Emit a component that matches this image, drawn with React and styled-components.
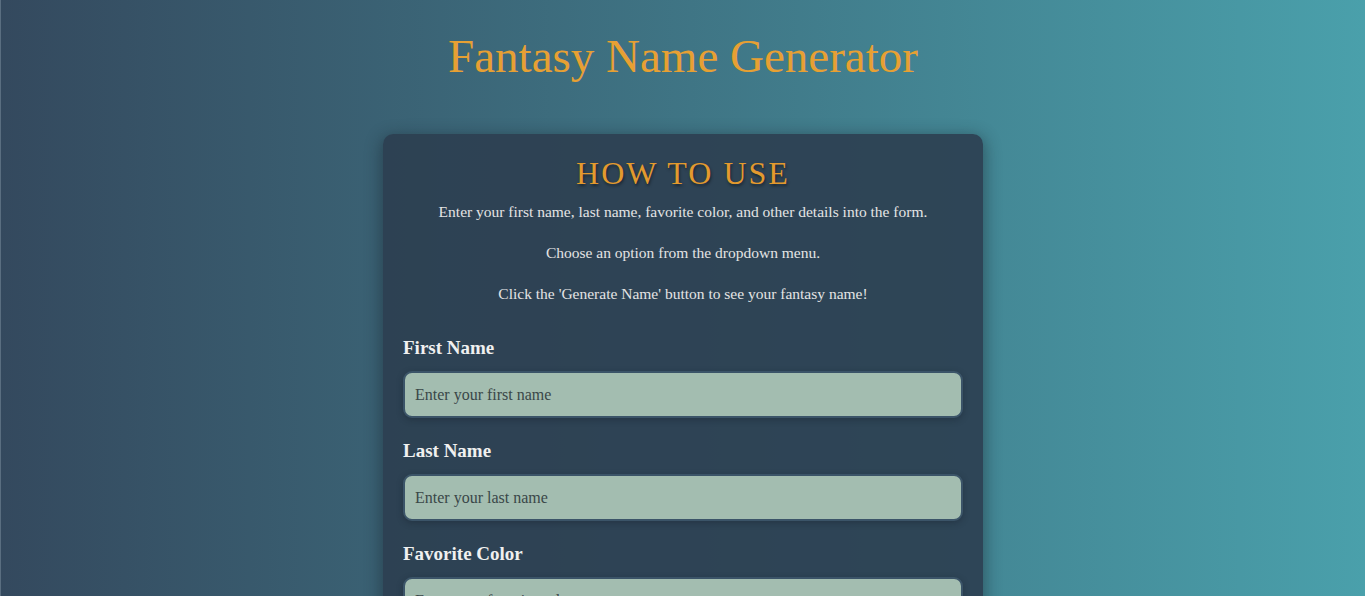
import styled, { createGlobalStyle } from 'styled-components';

const Global = createGlobalStyle`
  html, body {
    margin:0;
    padding:0;
  }
  body{
    min-height:100vh;
    background:linear-gradient(90deg, #34495e 0%, #4aa0ab 100%);
    font-family:"Liberation Serif", "DejaVu Serif", serif;
    border-left:1px solid #5a6e80;
  }
`;

const Page = styled.div`
  display:flex;
  flex-direction:column;
  align-items:center;
  padding-top:28px;
`;

const Title = styled.h1`
  margin:0;
  font-size:47px;
  font-weight:normal;
  color:#e7a033;
  line-height:56px;
`;

const Card = styled.div`
  margin-top:50px;
  width:600px;
  box-sizing:border-box;
  padding:20px 20px 30px;
  background-color:rgba(44,62,80,0.9);
  border-radius:10px;
  box-shadow:0 4px 16px 2px rgba(20,30,40,0.45);
`;

const Heading = styled.h2`
  margin:0;
  text-align:center;
  font-size:32px;
  font-weight:normal;
  letter-spacing:2px;
  text-transform:uppercase;
  color:#e39a2e;
  text-shadow:1px 2px 3px rgba(0,0,0,0.45);
  line-height:38px;
`;

const Step = styled.p`
  margin:0;
  text-align:center;
  font-size:15.5px;
  line-height:20px;
  color:#e4e4e4;
  & + &{
    margin-top:21px;
  }
`;

const Steps = styled.div`
  margin-top:10px;
`;

const Form = styled.div`
  margin-top:33px;
  display:flex;
  flex-direction:column;
  gap:22px;
`;

const Field = styled.div`
  display:flex;
  flex-direction:column;
  gap:12px;
`;

const Label = styled.label`
  font-size:19px;
  font-weight:bold;
  color:#f0f0f0;
  line-height:22px;
`;

const Input = styled.input`
  box-sizing:border-box;
  width:100%;
  height:47px;
  padding:0 10px;
  border:2px solid #3b5468;
  border-radius:9px;
  background-color:#a3bdb0;
  font-family:"Liberation Serif", "DejaVu Serif", serif;
  font-size:16px;
  color:#2c3e50;
  box-shadow:0 2px 6px rgba(20,30,40,0.35);
  outline:none;
  &::placeholder{
    color:#3a4748;
  }
`;

const fields = [
  { id: 'first', label: 'First Name', placeholder: 'Enter your first name' },
  { id: 'last', label: 'Last Name', placeholder: 'Enter your last name' },
  { id: 'color', label: 'Favorite Color', placeholder: 'Enter your favorite color' },
];

export default function App() {
  return (
    <Page>
      <Global />
      <Title>Fantasy Name Generator</Title>
      <Card>
        <Heading>How to Use</Heading>
        <Steps>
          <Step>Enter your first name, last name, favorite color, and other details into the form.</Step>
          <Step>Choose an option from the dropdown menu.</Step>
          <Step>Click the 'Generate Name' button to see your fantasy name!</Step>
        </Steps>
        <Form>
          {fields.map(f => (
            <Field key={f.id}>
              <Label htmlFor={f.id}>{f.label}</Label>
              <Input id={f.id} placeholder={f.placeholder} />
            </Field>
          ))}
        </Form>
      </Card>
    </Page>
  );
}
